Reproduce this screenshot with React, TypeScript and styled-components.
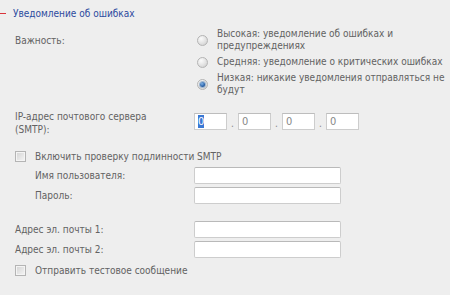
import { useEffect, useRef } from "react";
import styled, { createGlobalStyle } from "styled-components";

const GlobalStyle = createGlobalStyle`
  html, body {
    margin: 0;
    padding: 0;
    background: #eeeeee;
  }
  body {
    font-family: "DejaVu Sans Condensed", "DejaVu Sans", sans-serif;
    font-stretch: condensed;
    font-size: 10px;
    color: #626262;
  }
`;

const Page = styled.div`
  width: 450px;
  height: 295px;
  overflow: hidden;
`;

const Header = styled.div`
  display: flex;
  align-items: center;
  height: 26px;
`;

const Dash = styled.span`
  width: 6px;
  height: 1px;
  background: #d9343b;
  margin-right: 7px;
`;

const Title = styled.h2`
  margin: 0;
  font-size: 10px;
  font-weight: normal;
  color: #2c4a9e;
`;

const Row = styled.div<{ $top?: number; $indent?: boolean }>`
  display: grid;
  grid-template-columns: ${(p) => (p.$indent ? "159px" : "179px")} 1fr;
  align-items: center;
  padding-left: ${(p) => (p.$indent ? "35px" : "15px")};
  margin-top: ${(p) => p.$top ?? 0}px;
`;

const Label = styled.div<{ $offset?: number }>`
  line-height: 13px;
  align-self: ${(p) => (p.$offset !== undefined ? "start" : "center")};
  padding-top: ${(p) => p.$offset ?? 0}px;
`;

const RadioList = styled.div`
  display: flex;
  flex-direction: column;
  gap: 4px;
  padding-left: 3px;
`;

const Option = styled.label`
  display: flex;
  align-items: center;
  gap: 9px;
  line-height: 12px;
`;

const Radio = styled.span<{ $checked?: boolean }>`
  flex: none;
  width: 11px;
  height: 11px;
  border-radius: 50%;
  box-sizing: border-box;
  border: 1px solid #b4b4b4;
  background: radial-gradient(circle at 35% 30%, #fbfbfb 0%, #e2e2e2 55%, #c9c9c9 100%);
  display: flex;
  align-items: center;
  justify-content: center;

  &::after {
    content: "";
    display: ${(p) => (p.$checked ? "block" : "none")};
    width: 5px;
    height: 5px;
    border-radius: 50%;
    background: radial-gradient(circle at 40% 35%, #7fb2e6 0%, #2a62a8 60%, #163f78 100%);
    box-shadow: 0 0 0 1px #9fb6cf;
  }
`;

const OptionText = styled.span`
  white-space: pre;
`;

const IpGroup = styled.div`
  display: flex;
  align-items: flex-end;
  margin-bottom: 3px;
`;

const IpBox = styled.input`
  width: 33px;
  height: 17px;
  box-sizing: border-box;
  border: 1px solid #cdcdcd;
  border-top-color: #bdbdbd;
  background: #ffffff;
  padding: 0 0 0 3px;
  font: inherit;
  font-size: 11px;
  color: #888888;
  outline: none;

  &::selection {
    background: #3a78d4;
    color: #ffffff;
  }
`;

const Dot = styled.span`
  width: 11px;
  text-align: center;
  line-height: 12px;
  color: #888888;
`;

const TextBox = styled.input`
  width: 147px;
  height: 17px;
  box-sizing: border-box;
  border: 1px solid #cdcdcd;
  border-top-color: #b9b9b9;
  border-radius: 2px;
  background: #ffffff;
  font: inherit;
  outline: none;
`;

const CheckLine = styled.label<{ $top?: number }>`
  display: flex;
  align-items: center;
  gap: 9px;
  padding-left: 15px;
  margin-top: ${(p) => p.$top ?? 0}px;
  line-height: 13px;
`;

const Box = styled.span`
  width: 11px;
  height: 11px;
  box-sizing: border-box;
  border: 1px solid #b4b4b4;
  background: linear-gradient(135deg, #d2d2d2, #f6f6f6);
  box-shadow: inset 0 0 0 1px #f4f4f4;
`;

const levels = [
  { text: "Высокая: уведомление об ошибках и\nпредупреждениях", checked: false },
  { text: "Средняя: уведомление о критических ошибках", checked: false },
  { text: "Низкая: никакие уведомления отправляться не\nбудут", checked: true },
];

export default function App() {
  const firstIp = useRef<HTMLInputElement>(null);

  useEffect(() => {
    firstIp.current?.focus();
    firstIp.current?.select();
  }, []);

  return (
    <Page>
      <GlobalStyle />
      <Header>
        <Dash />
        <Title>Уведомление об ошибках</Title>
      </Header>

      <Row $top={2}>
        <Label $offset={6}>Важность:</Label>
        <RadioList>
          {levels.map((l) => (
            <Option key={l.text}>
              <Radio $checked={l.checked} />
              <OptionText>{l.text}</OptionText>
            </Option>
          ))}
        </RadioList>
      </Row>

      <Row $top={14}>
        <Label>
          IP-адрес почтового сервера
          <br />
          (SMTP):
        </Label>
        <IpGroup>
          <IpBox ref={firstIp} defaultValue="0" />
          <Dot>.</Dot>
          <IpBox defaultValue="0" />
          <Dot>.</Dot>
          <IpBox defaultValue="0" />
          <Dot>.</Dot>
          <IpBox defaultValue="0" />
        </IpGroup>
      </Row>

      <CheckLine $top={14}>
        <Box />
        Включить проверку подлинности SMTP
      </CheckLine>

      <Row $top={4} $indent>
        <Label>Имя пользователя:</Label>
        <TextBox />
      </Row>
      <Row $top={3} $indent>
        <Label>Пароль:</Label>
        <TextBox type="password" />
      </Row>

      <Row $top={17}>
        <Label>Адрес эл. почты 1:</Label>
        <TextBox />
      </Row>
      <Row $top={3}>
        <Label>Адрес эл. почты 2:</Label>
        <TextBox />
      </Row>

      <CheckLine $top={6}>
        <Box />
        Отправить тестовое сообщение
      </CheckLine>
    </Page>
  );
}
